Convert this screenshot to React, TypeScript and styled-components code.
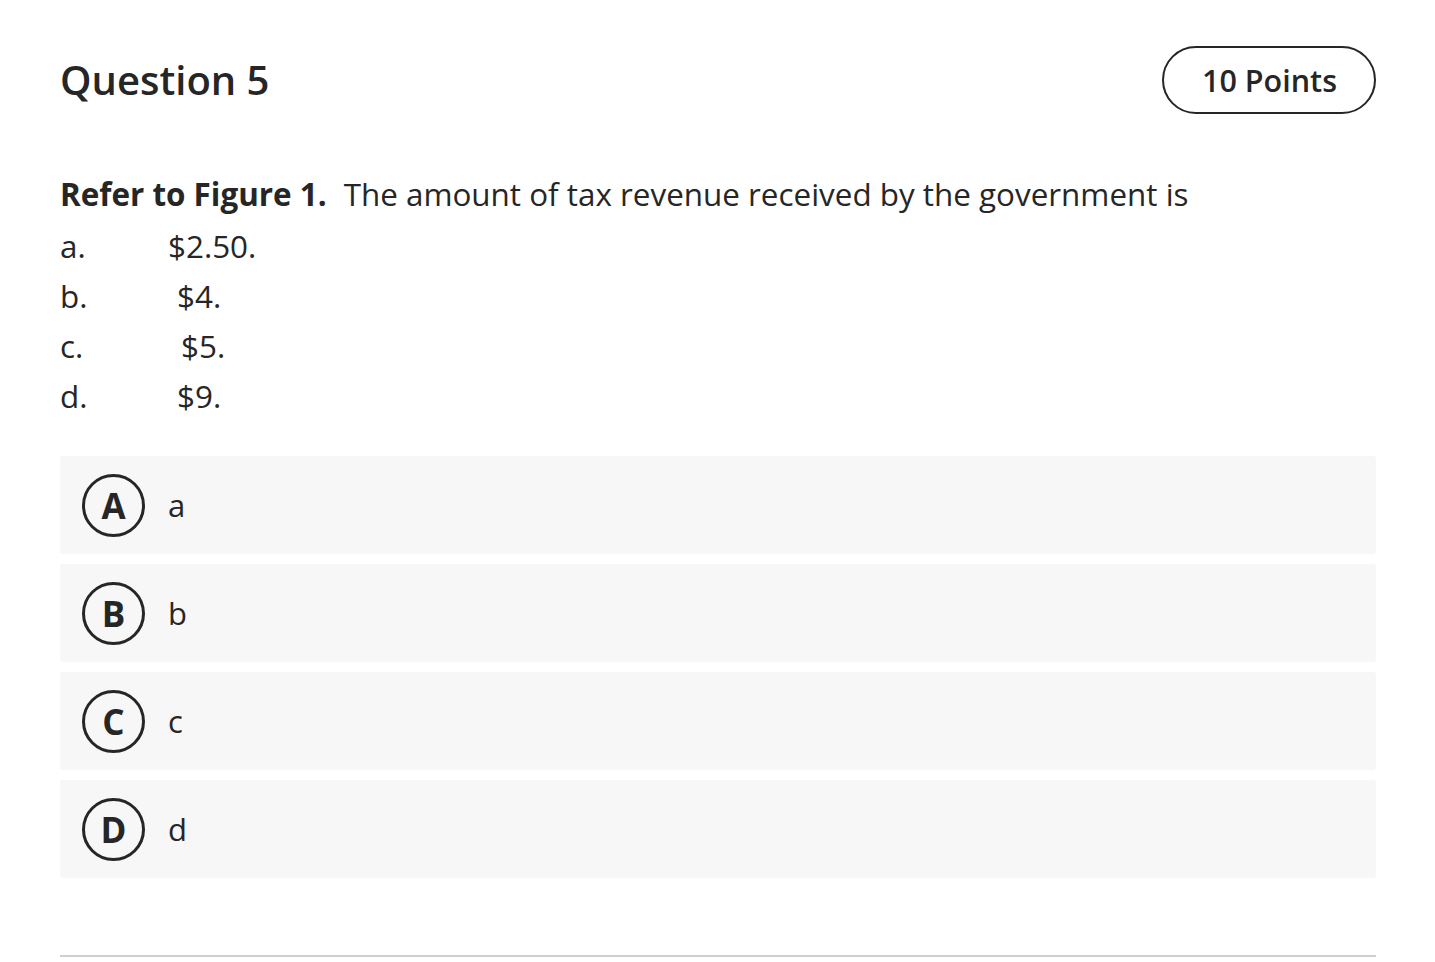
import React from "react";
import styled, { createGlobalStyle } from "styled-components";

const Global = createGlobalStyle`
  html, body { margin: 0; padding: 0; background: #ffffff; }
  body { font-family: "Open Sans", "Noto Sans", sans-serif; color: #262626; }
`;

const Page = styled.div`
  padding: 46px 59px 0 60px;
  display: flex;
  flex-direction: column;
`;

const Header = styled.div`
  display: flex;
  justify-content: space-between;
  align-items: center;
`;

const Title = styled.h1`
  margin: 0;
  font-size: 40px;
  font-weight: 600;
  color: #262626;
  line-height: 66px;
`;

const Points = styled.div`
  box-sizing: border-box;
  height: 68px;
  padding: 0 37px 0 38px;
  margin-left: auto;
  border: 2px solid #262626;
  border-radius: 34px;
  display: flex;
  align-items: center;
  font-size: 30.5px;
  font-weight: 600;
  color: #262626;
`;

const Prompt = styled.p`
  margin: 53px 0 0 0;
  font-size: 31.4px;
  line-height: 54px;
  color: #262626;
`;

const Strong = styled.b`
  font-weight: 700;
  margin-right: 17px;
`;

const Options = styled.div`
  display: flex;
  flex-direction: column;
`;

const OptionLine = styled.div`
  display: grid;
  grid-template-columns: 108px auto;
  font-size: 31.4px;
  line-height: 50px;
  color: #262626;
`;

const Value = styled.span<{ $shift: number }>`
  padding-left: ${(p) => p.$shift}px;
`;

const Choices = styled.div`
  margin-top: 35px;
  display: flex;
  flex-direction: column;
  gap: 10px;
`;

const Choice = styled.div`
  height: 98px;
  background: #f7f7f7;
  border-radius: 3px;
  display: flex;
  align-items: center;
  padding-left: 22px;
  gap: 23px;
`;

const Badge = styled.div`
  box-sizing: border-box;
  width: 63px;
  height: 63px;
  border: 3px solid #262626;
  border-radius: 50%;
  display: flex;
  align-items: center;
  justify-content: center;
  font-size: 35px;
  font-weight: 700;
  color: #262626;
`;

const ChoiceLabel = styled.span`
  font-size: 31px;
  color: #262626;
`;

const Divider = styled.hr`
  margin: 77px 0 0 0;
  border: 0;
  border-top: 2px solid #cfcfcf;
`;

const lines = [
  { k: "a.", v: "$2.50.", s: 0 },
  { k: "b.", v: "$4.", s: 9 },
  { k: "c.", v: "$5.", s: 13 },
  { k: "d.", v: "$9.", s: 9 },
];

const choices = ["A", "B", "C", "D"];

export default function App() {
  return (
    <>
      <Global />
      <Page>
        <Header>
          <Title>Question 5</Title>
          <Points>10 Points</Points>
        </Header>
        <Prompt>
          <Strong>Refer to Figure 1.</Strong>The amount of tax revenue received by the government is
        </Prompt>
        <Options>
          {lines.map((l) => (
            <OptionLine key={l.k}>
              <span>{l.k}</span>
              <Value $shift={l.s}>{l.v}</Value>
            </OptionLine>
          ))}
        </Options>
        <Choices>
          {choices.map((c) => (
            <Choice key={c}>
              <Badge>{c}</Badge>
              <ChoiceLabel>{c.toLowerCase()}</ChoiceLabel>
            </Choice>
          ))}
        </Choices>
        <Divider />
      </Page>
    </>
  );
}
